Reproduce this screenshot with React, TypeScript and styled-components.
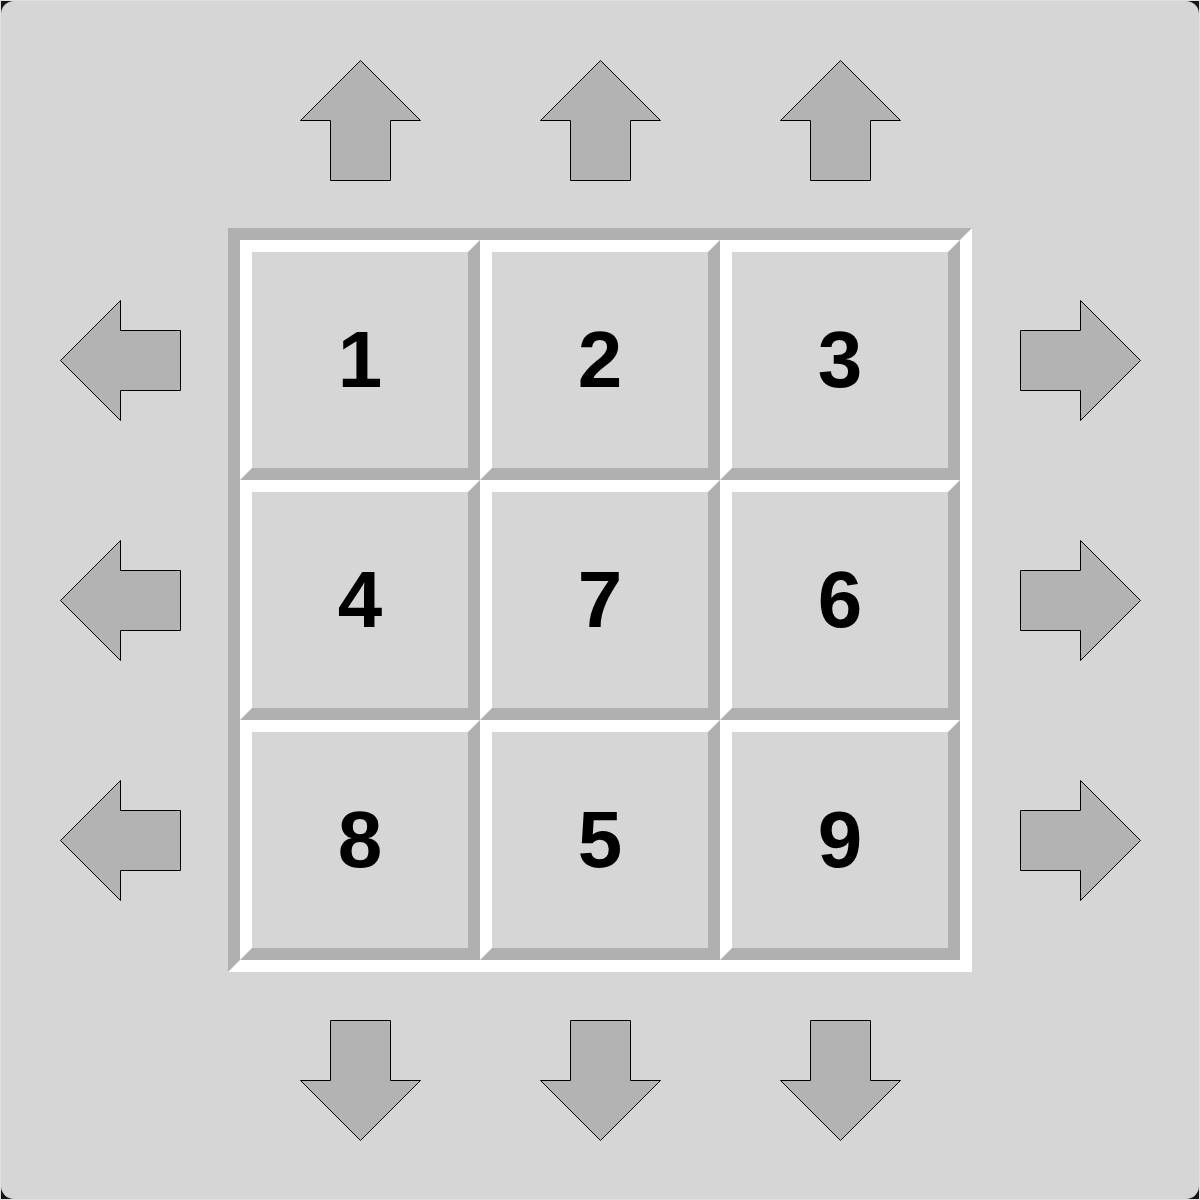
import React from 'react';
import styled, { createGlobalStyle } from 'styled-components';

const GlobalStyle = createGlobalStyle`
	html, body {
		margin: 0;
		padding: 0;
		background: #151515;
	}
	body {
		font-family: 'Liberation Sans', Arial, sans-serif;
	}
`;

type Dir = 'up' | 'down' | 'left' | 'right';

const rotation: Record<Dir, number> = {
	up: 0,
	right: 90,
	down: 180,
	left: 270,
};

const tiles = [1, 2, 3, 4, 7, 6, 8, 5, 9];

const Arrow = ({ dir }: { dir: Dir }) => (
	<ArrowSvg viewBox="0 0 121 121" width={121} height={121} $deg={rotation[dir]}>
		<polygon
			points="60.5,0.5 120.5,60.5 90.5,60.5 90.5,120.5 30.5,120.5 30.5,60.5 0.5,60.5"
			fill="#b3b3b3"
			stroke="#000"
			strokeWidth={1}
		/>
	</ArrowSvg>
);

const ArrowSet = ({ dir, area }: { dir: Dir; area: string }) => {
	const Wrap = dir === 'up' || dir === 'down' ? ArrowRow : ArrowColumn;
	return (
		<Wrap $area={area}>
			{[0, 1, 2].map((i) => (
				<ArrowSlot key={i}>
					<Arrow dir={dir} />
				</ArrowSlot>
			))}
		</Wrap>
	);
};

export default function App() {
	return (
		<>
			<GlobalStyle />
			<Frame>
				<Panel>
					<ArrowSet dir="up" area="top" />
					<ArrowSet dir="left" area="left" />
					<Board>
						{tiles.map((n) => (
							<Tile key={n}>{n}</Tile>
						))}
					</Board>
					<ArrowSet dir="right" area="right" />
					<ArrowSet dir="down" area="bottom" />
				</Panel>
			</Frame>
		</>
	);
}

const Frame = styled.div`
	width: 1200px;
	height: 1200px;
	box-sizing: border-box;
	border: 1px solid #dde1e4;
	background: #151515;
`;
const Panel = styled.div`
	display: grid;
	width: 1198px;
	height: 1198px;
	grid-template-columns: 59px 120px 48px 744px 48px 120px 59px;
	grid-template-rows: 59px 120px 48px 744px 48px 120px 59px;
	grid-template-areas:
		'. . . . . . .'
		'. . . top . . .'
		'. . . . . . .'
		'. left . board . right .'
		'. . . . . . .'
		'. . . bottom . . .'
		'. . . . . . .';
	background: #d6d6d6;
	border-radius: 13px;
`;
const ArrowRow = styled.div<{ $area: string }>`
	grid-area: ${(p) => p.$area};
	display: flex;
	flex-direction: row;
	padding: 0 12px;
`;
const ArrowColumn = styled.div<{ $area: string }>`
	grid-area: ${(p) => p.$area};
	display: flex;
	flex-direction: column;
	padding: 12px 0;
`;
const ArrowSlot = styled.div`
	flex: 1;
	display: flex;
	justify-content: center;
	align-items: center;
`;
const ArrowSvg = styled.svg<{ $deg: number }>`
	display: block;
	flex: none;
	transform: rotate(${(p) => p.$deg}deg);
`;
const Board = styled.div`
	grid-area: board;
	display: grid;
	grid-template-columns: repeat(3, 240px);
	grid-template-rows: repeat(3, 240px);
	box-sizing: border-box;
	border: 12px solid;
	border-color: #b0b0b0 #ffffff #ffffff #b0b0b0;
`;
const Tile = styled.div`
	display: flex;
	justify-content: center;
	align-items: center;
	box-sizing: border-box;
	border: 12px solid;
	border-color: #ffffff #b0b0b0 #b0b0b0 #ffffff;
	background: #d6d6d6;
	font-family: 'Liberation Sans', Arial, sans-serif;
	font-weight: 700;
	font-size: 80px;
	line-height: 1;
	color: #000;
`;
